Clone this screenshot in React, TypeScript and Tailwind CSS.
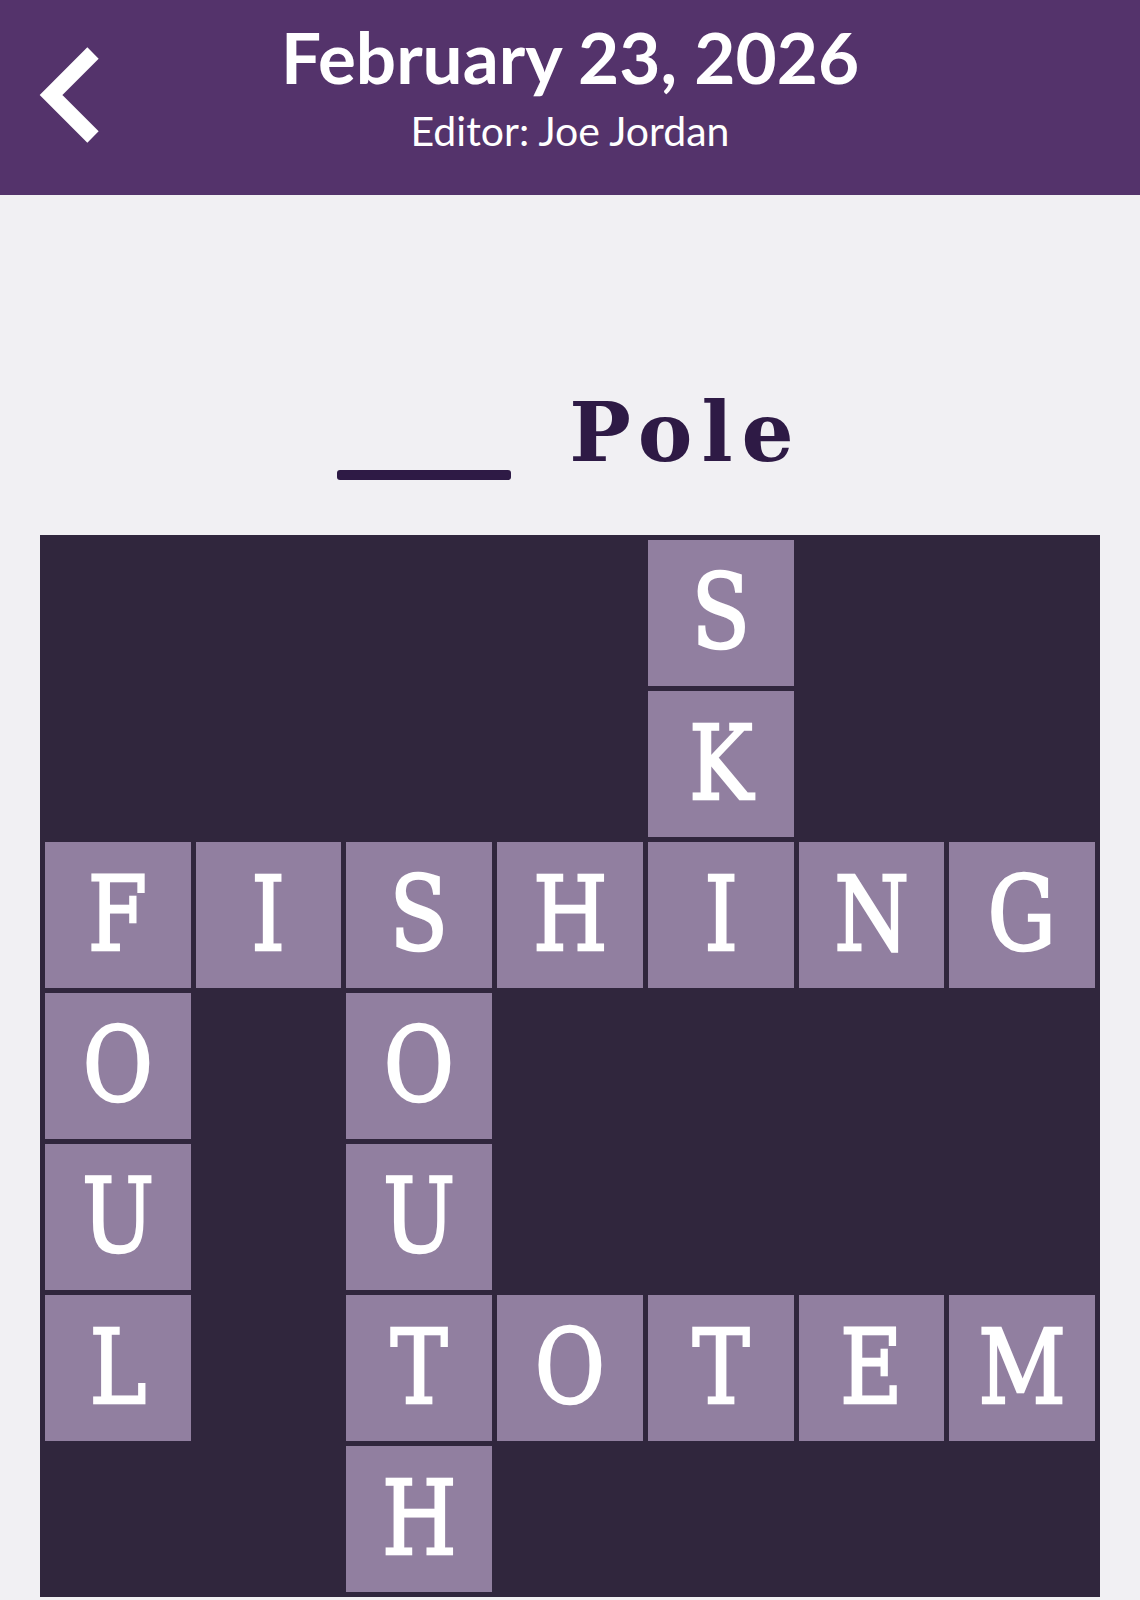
import React from 'react';

const rows = [
  '....S..',
  '....K..',
  'FISHING',
  'O.O....',
  'U.U....',
  'L.TOTEM',
  '..H....',
];

const Tile: React.FC<{ letter: string }> = ({ letter }) => {
  if (letter === '.') return <div className="h-[146px]" />;
  return (
    <div className="flex h-[146px] items-center justify-center bg-[#917fa0] text-[102px] leading-none text-white [font-family:'DejaVu_Serif',serif]">
      <span className="inline-block scale-x-[0.84] [-webkit-text-stroke:2.5px_white]">{letter}</span>
    </div>
  );
};

export default function App() {
  return (
    <div className="min-h-[1600px] bg-[#f1f0f3] [font-family:Lato,'Open_Sans',sans-serif]">
      <header className="relative flex h-[195px] flex-col items-center bg-[#54336b] text-white">
        <button className="absolute left-[30px] top-[40px] h-[110px] w-[80px]" aria-label="Back">
          <svg viewBox="0 0 80 110" className="h-full w-full">
            <polyline points="63,13 21,55 63,97" fill="none" stroke="white" strokeWidth="16" strokeLinejoin="miter" />
          </svg>
        </button>
        <h1 className="mt-[15px] text-[71px] font-bold leading-[84px]">February 23, 2026</h1>
        <p className="mt-[7px] text-[41px] leading-[49px] font-normal">Editor: Joe Jordan</p>
      </header>

      <main className="flex flex-col items-center pt-[187px]">
        <h2 className="flex items-start text-[#2e1a45]">
          <span className="mt-[88px] inline-block h-[10px] w-[174px] rounded-[3px] bg-[#2e1a45]" />
          <span className="ml-[58px] text-[82px] font-bold leading-[100px] tracking-[9px] [font-family:'DejaVu_Serif',serif]">
            Pole
          </span>
        </h2>
        <div className="mt-[53px] grid w-[1060px] grid-cols-7 gap-[5px] bg-[#30263d] p-[5px]">
          {rows.map((row, r) =>
            row.split('').map((ch, c) => <Tile key={`${r}-${c}`} letter={ch} />)
          )}
        </div>
      </main>
    </div>
  );
}
